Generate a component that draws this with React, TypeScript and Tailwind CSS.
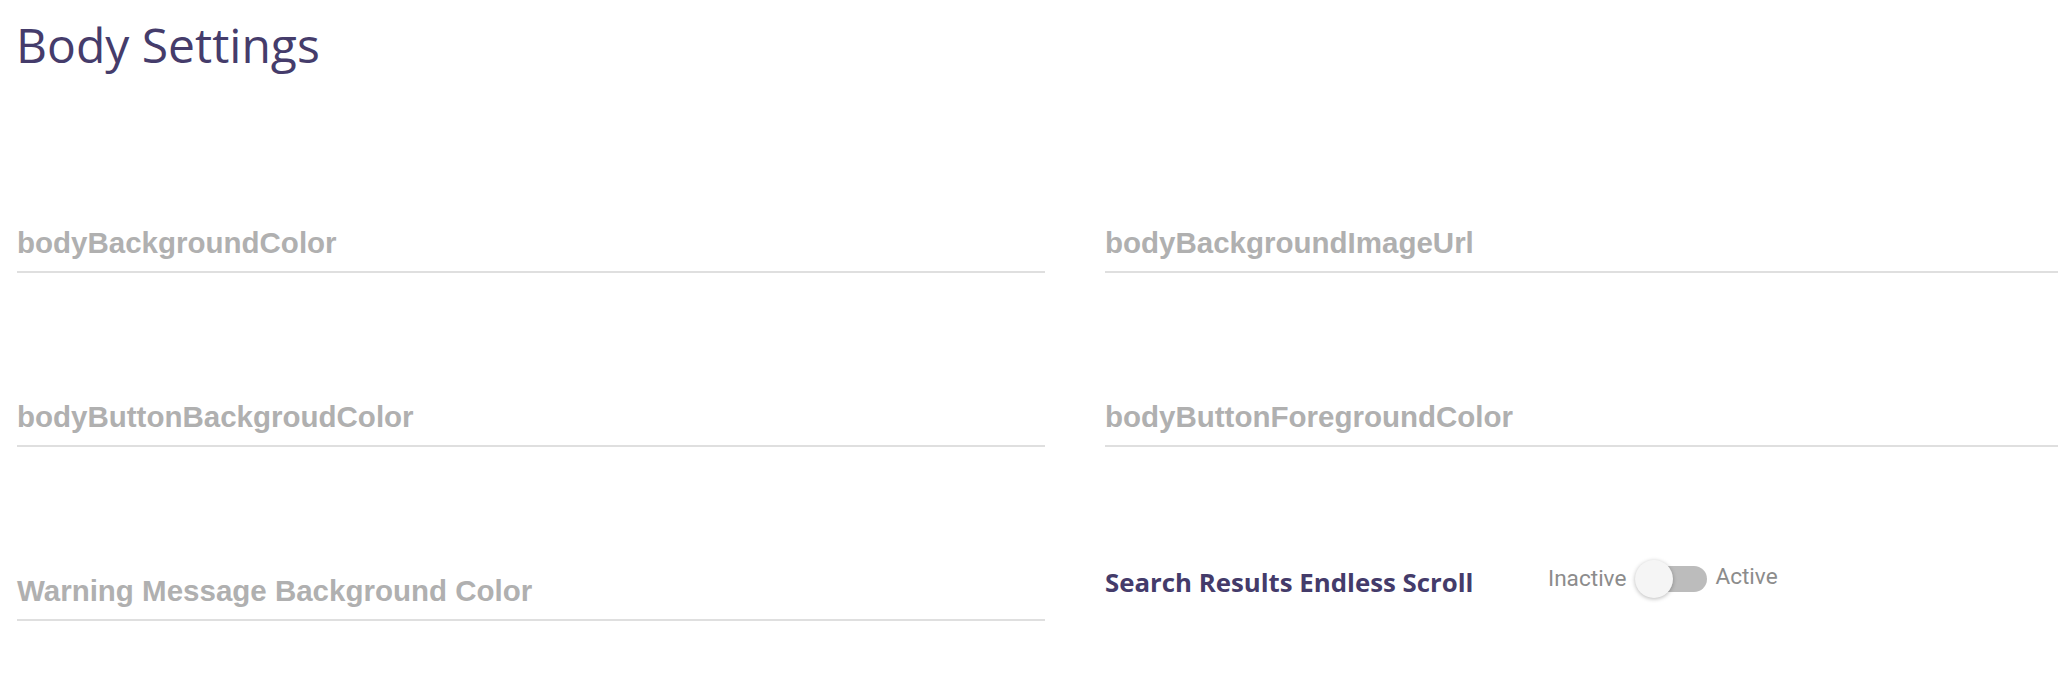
import React from "react";

const labelCls =
  "text-[29.5px] leading-[34px] font-bold text-[#b0b0b0] whitespace-nowrap";
const fieldCls = "border-b-2 border-[#dfdfdf] pb-[11px]";

function Field({ label }: { label: string }) {
  return (
    <div className={fieldCls}>
      <div className={labelCls} style={{ fontFamily: "'Liberation Sans', Arial, sans-serif" }}>
        {label}
      </div>
    </div>
  );
}

function Toggle() {
  return (
    <div
      className="flex items-center h-[30px] text-[22.6px] leading-[26px] text-[#8c8c8c]"
      style={{ fontFamily: "Roboto, 'Liberation Sans', sans-serif" }}
    >
      <span className="mr-[15px]">Inactive</span>
      <div className="relative w-[66px] h-[26px] rounded-full bg-[#bcbcbc]">
        <div className="absolute left-[-6px] top-[-6px] w-[38px] h-[38px] rounded-full bg-[#f5f5f5] shadow-[0_1px_4px_rgba(0,0,0,0.28)]" />
      </div>
      <span className="ml-[8px] -mt-[4px]">Active</span>
    </div>
  );
}

export default function App() {
  return (
    <div className="w-full min-h-[676px] bg-white overflow-hidden pt-[16px] pl-[17px]">
      <h1
        className="text-[48px] leading-[58px] font-normal text-[#453c6b] -ml-[1px]"
        style={{ fontFamily: "'Open Sans', sans-serif" }}
      >
        Body Settings
      </h1>
      <div className="mt-[152px] grid grid-cols-[1028px_1fr] gap-x-[60px] gap-y-[127px]">
        <Field label="bodyBackgroundColor" />
        <Field label="bodyBackgroundImageUrl" />
        <Field label="bodyButtonBackgroudColor" />
        <Field label="bodyButtonForegroundColor" />
        <Field label="Warning Message Background Color" />
        <div className="flex items-start -mt-[10px]">
          <div
            className="w-[443px] shrink-0 text-[25.8px] leading-[36px] font-bold text-[#443b6a] whitespace-nowrap"
            style={{ fontFamily: "'Open Sans', sans-serif" }}
          >
            Search Results Endless Scroll
          </div>
          <Toggle />
        </div>
      </div>
    </div>
  );
}
